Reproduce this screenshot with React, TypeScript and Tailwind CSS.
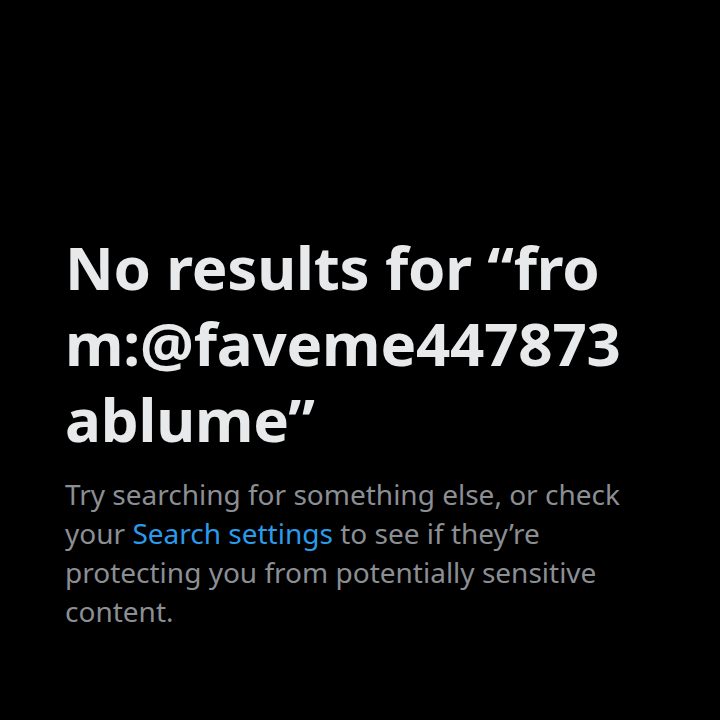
export default function App() {
  return (
    <div className="w-[720px] h-[720px] bg-black flex flex-col justify-center px-[65px]" style={{ fontFamily: '"Noto Sans", sans-serif' }}>
      <div className="pt-[140px]">
        <h1 className="text-[#e7e9ea] font-bold text-[60px] leading-[76px] tracking-[-0.2px] whitespace-nowrap">
          No results for “fro<br />m:@faveme447873<br />ablume”
        </h1>
        <p className="mt-[18px] text-[#8b8f94] text-[28px] leading-[39px] tracking-[0px] whitespace-nowrap">
          Try searching for something else, or check<br />your{' '}
          <span className="text-[#2a9bea]">Search settings</span> to see if they’re<br />protecting you from potentially sensitive<br />content.
        </p>
      </div>
    </div>
  );
}
